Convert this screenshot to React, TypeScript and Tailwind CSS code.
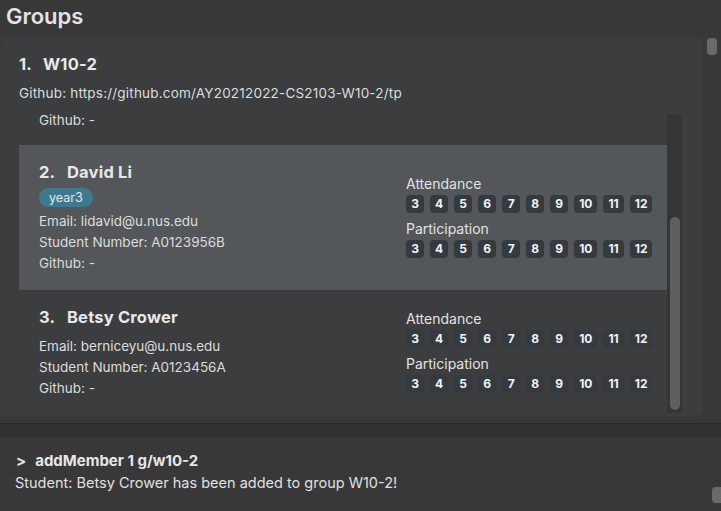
import React from "react";

const weeks = ["3", "4", "5", "6", "7", "8", "9", "10", "11", "12"];

function Chips() {
  return (
    <div className="flex gap-[6px] mt-[1px]">
      {weeks.map((w) => (
        <div
          key={w}
          className="h-[18px] min-w-[18px] px-[5px] rounded-[4px] bg-[#343a40] text-[12px] font-bold leading-[18px] text-[#f2f2f2] text-center"
        >
          {w}
        </div>
      ))}
    </div>
  );
}

function Right() {
  return (
    <div className="flex flex-col mb-[4px] shrink-0">
      <div className="h-[20px] leading-[20px] text-[14px] text-[#e2e2e2]">Attendance</div>
      <Chips />
      <div className="h-[20px] leading-[20px] text-[14px] text-[#e2e2e2] mt-[6px]">Participation</div>
      <Chips />
    </div>
  );
}

function Line({ children }: { children: React.ReactNode }) {
  return <div className="h-[21px] leading-[21px] text-[13.5px] text-[#dcdcdc]">{children}</div>;
}

function Card({
  idx,
  name,
  tag,
  email,
  num,
  selected,
}: {
  idx: string;
  name: string;
  tag?: string;
  email: string;
  num: string;
  selected?: boolean;
}) {
  return (
    <div
      className={
        "flex items-center px-[20px] py-[16px] shrink-0 " + (selected ? "bg-[#53575a] h-[145px]" : "bg-transparent")
      }
    >
      <div className="w-[367px] shrink-0 flex flex-col">
        <div className="flex h-[22px] leading-[22px] text-[16.5px] font-bold text-[#e8e8e8] tracking-[0.2px]">
          <span className="w-[28px]">{idx}</span>
          <span>{name}</span>
        </div>
        {tag ? (
          <div className="mt-[5px] mb-[4px] self-start h-[19px] px-[10px] rounded-full bg-[#3d7a90] text-[12.5px] leading-[19px] text-[#e6e6e6]">
            {tag}
          </div>
        ) : (
          <div className="h-[8px]" />
        )}
        <Line>Email: {email}</Line>
        <Line>Student Number: {num}</Line>
        <Line>Github: -</Line>
      </div>
      <Right />
    </div>
  );
}

export default function App() {
  return (
    <div
      className="w-[721px] h-[511px] bg-[#383838] flex flex-col overflow-hidden"
      style={{ fontFamily: "Inter, 'Noto Sans', sans-serif" }}
    >
      <div className="h-[37px] pl-[6px] flex items-center text-[22px] font-semibold text-[#e4e4e4] pb-[4px]">
        Groups
      </div>
      <div className="flex h-[380px] shrink-0">
        <div className="w-[702px] bg-[#3c3d3f] rounded-[7px] flex flex-col pt-[16px]">
          <div className="flex pl-[19px] h-[22px] leading-[22px] text-[16.5px] font-bold text-[#e8e8e8] tracking-[0.2px]">
            <span className="w-[24px]">1.</span>
            <span>W10-2</span>
          </div>
          <div className="pl-[19px] mt-[8px] h-[20px] leading-[20px] text-[13.5px] tracking-[0.2px] text-[#dcdcdc]">
            Github: https://github.com/AY20212022-CS2103-W10-2/tp
          </div>
          <div className="mt-[5px] flex pl-[19px] h-[305px]">
            <div className="w-[648px] overflow-hidden flex flex-col">
              <div className="h-[37px] shrink-0 pl-[20px] pt-[2px]">
                <Line>Github: -</Line>
              </div>
              <Card idx="2." name="David Li" tag="year3" email="lidavid@u.nus.edu" num="A0123956B" selected />
              <Card idx="3." name="Betsy Crower" email="berniceyu@u.nus.edu" num="A0123456A" />
            </div>
            <div className="w-[15px] mt-[6px] h-[299px] bg-[#353535] flex flex-col items-center pt-[103px]">
              <div className="w-[10px] h-[193px] rounded-[5px] bg-[#5f5f5f]" />
            </div>
          </div>
        </div>
        <div className="flex-1 flex justify-center pt-[1px]">
          <div className="w-[10px] h-[17px] rounded-[4px] bg-[#6a6a6a]" />
        </div>
      </div>
      <div className="h-[6px] shrink-0" />
      <div className="h-[1px] bg-[#2a2a2a] shrink-0" />
      <div className="h-[13px] bg-[#323232] shrink-0" />
      <div className="flex-1 relative pt-[14px] px-[15px]">
        <div className="h-[20px] leading-[20px] text-[15px] font-bold text-[#e6e6e6] pl-[1px]">
          <span className="mr-[9px]">&gt;</span>addMember 1 g/w10-2
        </div>
        <div className="h-[20px] leading-[20px] text-[14.5px] text-[#e0e0e0] mt-[2px]">
          Student: Betsy Crower has been added to group W10-2!
        </div>
        <div className="absolute right-0 top-[50px] w-[9px] h-[16px] rounded-l-[4px] bg-[#6a6a6a]" />
      </div>
    </div>
  );
}
